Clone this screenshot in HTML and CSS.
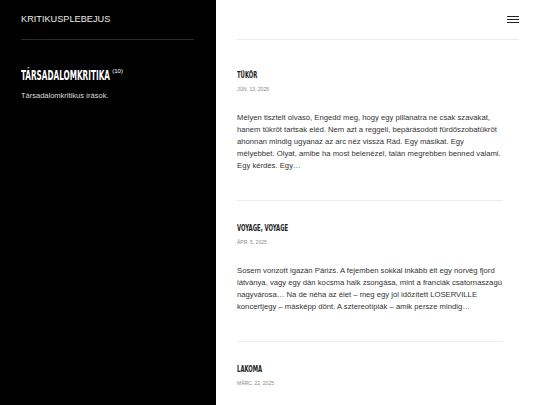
FILE: index.html
```html
<!DOCTYPE html>
<html lang="hu">
<head>
    <meta charset="UTF-8">
    <meta name="viewport" content="width=device-width, initial-scale=1.0">
    <title>Társadalomkritika – Kritikusplebejus</title>
    <link rel="stylesheet" href="styles.css">
</head>
<body>

    <aside class="sidebar">
        <div class="site-title">KRITIKUSPLEBEJUS</div>
        <div class="category">
            <h1 class="category-name"><span class="narrow">Társadalomkritika</span><sup>(10)</sup></h1>
            <p class="category-desc">Társadalomkritikus írások.</p>
        </div>
    </aside>

    <main class="content">
        <header class="topbar">
            <button class="menu-toggle" aria-label="Menü">
                <span></span><span></span><span></span>
            </button>
        </header>

        <article class="post">
            <h2 class="post-title"><span class="narrow">Tükör</span></h2>
            <div class="post-date">jún. 13, 2025</div>
            <p class="post-excerpt">Mélyen tisztelt olvasó, Engedd meg, hogy egy pillanatra ne csak szavakat, hanem tükröt tartsak eléd. Nem azt a reggeli, bepárásodott fürdőszobatükröt ahonnan mindig ugyanaz az arc néz vissza Rád. Egy másikat. Egy mélyebbet. Olyat, amibe ha most belenézel, talán megrebben benned valami. Egy kérdés. Egy…</p>
        </article>

        <article class="post">
            <h2 class="post-title"><span class="narrow">Voyage, Voyage</span></h2>
            <div class="post-date">ápr. 5, 2025</div>
            <p class="post-excerpt">Sosem vonzott igazán Párizs. A fejemben sokkal inkább élt egy norvég fjord látványa, vagy egy dán kocsma halk zsongása, mint a franciák csatornaszagú nagyvárosa… Na de néha az élet – meg egy jól időzített LOSERVILLE koncertjegy – másképp dönt. A sztereotípiák – amik persze mindig…</p>
        </article>

        <article class="post">
            <h2 class="post-title"><span class="narrow">Lakoma</span></h2>
            <div class="post-date">márc. 22, 2025</div>
        </article>
    </main>

</body>
</html>
```

FILE: styles.css
```css
body {
    font-family: "Liberation Sans", Arial, sans-serif;
    margin: 0;
    padding: 0;
    height: 100vh;
    display: flex;
    overflow: hidden;
    background-color: #fff;
}

/* condensed display face: squeeze DejaVu Condensed Bold */
.narrow {
    display: inline-block;
    transform: scaleX(0.68);
    transform-origin: left center;
}

.sidebar {
    width: 216px;
    flex-shrink: 0;
    background-color: #000;
    color: #fff;
    padding: 0 22px 0 21px;
    box-sizing: border-box;
}

.site-title {
    height: 39px;
    line-height: 39px;
    font-size: 9.2px;
    color: #ececec;
    border-bottom: 1px solid #2a2a2a;
}

.category {
    padding-top: 28px;
}

.category-name {
    margin: 0;
    display: flex;
    align-items: flex-start;
    font-family: "DejaVu Sans Condensed", sans-serif;
    font-weight: bold;
    font-size: 13.5px;
    line-height: 14px;
    text-transform: uppercase;
    color: #fff;
}

.category-name .narrow {
    transform: scaleX(0.6);
    margin-right: -57px;
}

.category-name sup {
    font-family: "Liberation Sans", Arial, sans-serif;
    font-weight: normal;
    font-size: 6px;
    line-height: 8px;
    margin-top: -1px;
}

.category-desc {
    margin: 8px 0 0;
    font-size: 7.5px;
    line-height: 12px;
    color: #ddd;
}

.content {
    flex: 1;
    padding: 0 21px;
}

.topbar {
    height: 39px;
    border-bottom: 1px solid #ececec;
    display: flex;
    justify-content: flex-end;
    align-items: center;
    margin-bottom: 8px;
}

.menu-toggle {
    background: none;
    border: none;
    padding: 0;
    width: 12px;
    display: flex;
    flex-direction: column;
    gap: 2px;
    cursor: pointer;
}

.menu-toggle span {
    display: block;
    height: 1px;
    background-color: #222;
}

.post {
    width: 266px;
    padding: 21px 0 28px;
    border-bottom: 1px solid #ececec;
}

.post:last-child {
    border-bottom: none;
}

.post-title {
    margin: 0;
    font-family: "DejaVu Sans Condensed", sans-serif;
    font-weight: bold;
    font-size: 9.5px;
    line-height: 12px;
    text-transform: uppercase;
    color: #222;
}

.post-title .narrow {
    transform: scaleX(0.62);
}

.post-date {
    margin-top: 4px;
    font-size: 5px;
    line-height: 8px;
    text-transform: uppercase;
    color: #888;
}

.post-excerpt {
    margin: 19px 0 0;
    font-size: 7.7px;
    line-height: 12px;
    color: #333;
}
```
